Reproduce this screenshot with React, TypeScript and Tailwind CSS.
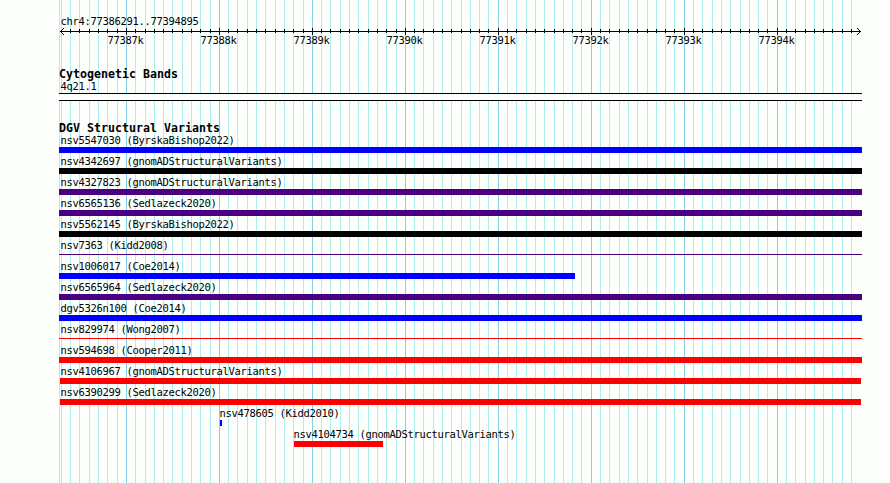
const START = 77386291;
const END = 77394895;
const SCALE = 800 / (END - START + 1);
const toX = (pos: number) => Math.max(59, Math.round(60 + (pos - START) * SCALE));

const ticks = Array.from({ length: 87 }, (_, i) => {
  const pos = 77386200 + i * 100;
  return { pos, x: toX(pos), major: pos % 1000 === 0 };
});

const small =
  "block whitespace-pre pl-[0.5px] font-['DejaVu_Sans_Mono','Liberation_Mono',monospace] text-[10.5px] leading-[13px] tracking-[-0.321px] text-black";
const title =
  "block whitespace-pre font-['DejaVu_Sans_Mono','Liberation_Mono',monospace] text-[11.6px] font-bold leading-[13px] tracking-[0.017px] text-black";

type Variant = { name: string; label: string; bar: string };

const variants: Variant[] = [
  { name: 'nsv5547030 (ByrskaBishop2022)', label: 'ml-[60px]', bar: 'ml-[59px] h-1.5 w-[803px] bg-[#0000ff]' },
  { name: 'nsv4342697 (gnomADStructuralVariants)', label: 'ml-[60px]', bar: 'ml-[59px] h-1.5 w-[803px] bg-black' },
  { name: 'nsv4327823 (gnomADStructuralVariants)', label: 'ml-[60px]', bar: 'ml-[59px] h-1.5 w-[803px] bg-[#4b0082]' },
  { name: 'nsv6565136 (Sedlazeck2020)', label: 'ml-[60px]', bar: 'ml-[59px] h-1.5 w-[803px] bg-[#4b0082]' },
  { name: 'nsv5562145 (ByrskaBishop2022)', label: 'ml-[60px]', bar: 'ml-[59px] h-1.5 w-[803px] bg-black' },
  { name: 'nsv7363 (Kidd2008)', label: 'ml-[60px]', bar: 'ml-[59px] mt-0.5 h-px w-[803px] bg-[#4b0082]' },
  { name: 'nsv1006017 (Coe2014)', label: 'ml-[60px]', bar: 'ml-[59px] h-1.5 w-[516px] bg-[#0000ff]' },
  { name: 'nsv6565964 (Sedlazeck2020)', label: 'ml-[60px]', bar: 'ml-[59px] h-1.5 w-[803px] bg-[#4b0082]' },
  { name: 'dgv5326n100 (Coe2014)', label: 'ml-[60px]', bar: 'ml-[59px] h-1.5 w-[803px] bg-[#0000ff]' },
  { name: 'nsv829974 (Wong2007)', label: 'ml-[60px]', bar: 'ml-[59px] mt-0.5 h-px w-[803px] bg-[#ff0000]' },
  { name: 'nsv594698 (Cooper2011)', label: 'ml-[60px]', bar: 'ml-[59px] h-1.5 w-[803px] bg-[#ff0000]' },
  { name: 'nsv4106967 (gnomADStructuralVariants)', label: 'ml-[60px]', bar: 'ml-[60px] h-1.5 w-[801px] bg-[#ff0000]' },
  { name: 'nsv6390299 (Sedlazeck2020)', label: 'ml-[60px]', bar: 'ml-[60px] h-1.5 w-[801px] bg-[#ff0000]' },
  { name: 'nsv478605 (Kidd2010)', label: 'ml-[219px]', bar: 'ml-[220px] h-1.5 w-0.5 bg-[#0000ff]' },
  { name: 'nsv4104734 (gnomADStructuralVariants)', label: 'ml-[293px]', bar: 'ml-[294px] h-1.5 w-[89px] bg-[#ff0000]' },
];

function GridLines() {
  return (
    <svg className="absolute inset-0" width="890" height="483" shapeRendering="crispEdges">
      {ticks.map((t) => (
        <rect key={t.pos} x={t.x} y="0" width="1" height="483" fill={t.major ? '#87ceeb' : '#afeeee'} />
      ))}
    </svg>
  );
}

function Ruler() {
  return (
    <svg className="block h-[9px] w-[890px]" viewBox="0 0 890 9" shapeRendering="crispEdges">
      <rect x="60" y="4" width="801" height="1" />
      {ticks.slice(2).map((t) => (
        <rect key={t.pos} x={t.x} y={t.major ? 1 : 2} width="1" height={t.major ? 7 : 4} />
      ))}
      {[1, 2, 3].map((d) => (
        <g key={d}>
          <rect x={60 + d} y={4 - d} width="1" height="1" />
          <rect x={60 + d} y={4 + d} width="1" height="1" />
          <rect x={860 - d} y={4 - d} width="1" height="1" />
          <rect x={860 - d} y={4 + d} width="1" height="1" />
        </g>
      ))}
    </svg>
  );
}

export default function App() {
  return (
    <main className="relative h-[483px] w-[890px] overflow-hidden bg-[#fdfffd]">
      <GridLines />
      <div className="relative flex flex-col">
        <span className={`${small} mt-[15px] ml-[60px] h-3`}>chr4:77386291..77394895</span>
        <Ruler />
        <div className="-mt-0.5 ml-[107px] flex h-[13px]">
          {[77387, 77388, 77389, 77390, 77391, 77392, 77393, 77394].map((k) => (
            <span key={k} className={`${small} w-[93px]`}>{k}k</span>
          ))}
        </div>
        <section className="mt-[21px] h-[54px]">
          <h2 className={`${title} ml-[59px] h-3`}>Cytogenetic Bands</h2>
          <span className={`${small} ml-[60px] h-[13px]`}>4q21.1</span>
          <div className="ml-[59px] h-2 w-[803px] border-y border-black bg-[#fdfffd]" />
        </section>
        <section>
          <h2 className={`${title} ml-[59px] h-3`}>DGV Structural Variants</h2>
          {variants.map((v) => (
            <div key={v.name} className="flex h-[21px] flex-col">
              <span className={`${small} ${v.label}`}>{v.name}</span>
              <div className={`${v.bar} shrink-0`} />
            </div>
          ))}
        </section>
      </div>
    </main>
  );
}
